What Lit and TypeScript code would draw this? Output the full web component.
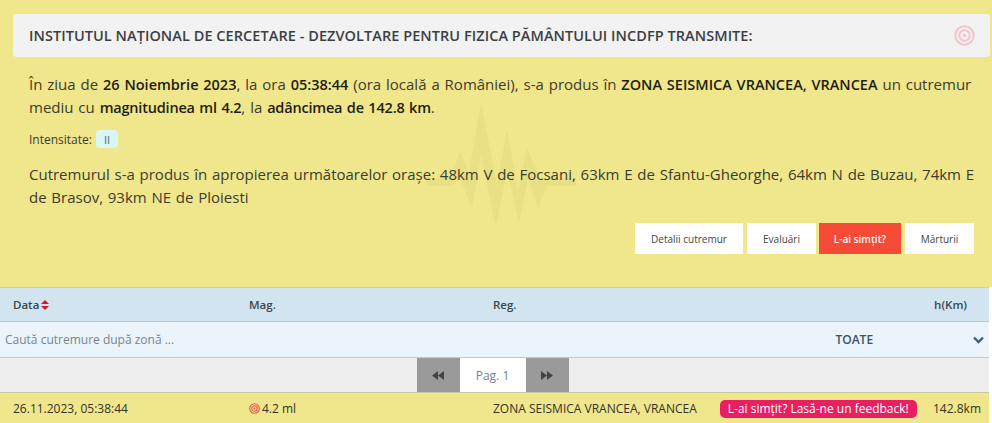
import { LitElement, html, css, svg } from "lit";
import { customElement } from "lit/decorators.js";

const target = (size: number, color: string) => html`<svg class="tg" width=${size} height=${size} viewBox="0 0 24 24" fill="none" stroke=${color} stroke-width="2.4">
  <circle cx="12" cy="12" r="10.5"></circle><circle cx="12" cy="12" r="6"></circle><circle cx="12" cy="12" r="2" fill=${color} stroke="none"></circle></svg>`;

@customElement("app-root")
export class AppRoot extends LitElement {
  static styles = css`
    :host { display: block; width: 992px; height: 423px; overflow: hidden; background: #fff;
      font-family: "Open Sans", sans-serif; color: #333; font-size: 14px; }
    * { box-sizing: border-box; }
    .panel { position: relative; height: 287px; background: #f0e68c; padding: 14px 2px 0 13px; }
    .wave { position: absolute; left: 427px; top: 100px; }
    .head { position: relative; height: 43px; background: #f2f2f2; border-radius: 4px; display: flex; align-items: center;
      justify-content: space-between; padding: 0 15px 0 16px; font-size: 14.5px; font-weight: 600; color: #3a3f44; letter-spacing: 0.06px; }
    .body { position: relative; padding: 16px 13px 0 16px; }
    p { margin: 0; font-size: 15px; line-height: 23px; color: #3c3c2c; word-spacing: 1px; }
    b { font-weight: 600; font-size: 14.5px; color: #1e1e12; }
    .tight { letter-spacing: -0.2px; }
    .int { display: flex; align-items: center; gap: 4px; height: 20px; margin-top: 10px; font-size: 12px; color: #3c3c2c; }
    .badge { background: #d9f7f7; border-radius: 4px; width: 22px; height: 18px; display: flex; align-items: center; justify-content: center; color: #55656f; font-size: 11px; }
    .p2 { margin-top: 14px; word-spacing: 0.85px; }
    .btns { display: flex; justify-content: flex-end; gap: 4px; margin: 14px 3px 0 0; }
    .btn { height: 31px; background: #fff; color: #444; font-size: 10px; display: flex; align-items: center; justify-content: center; }
    .b1 { width: 108px; } .b2 { width: 69px; } .b3 { width: 82px; background: #f44a36; color: #fff; font-weight: 600; margin-left: -1px; } .b4 { width: 69px; }
    .table { width: 989px; }
    .cols { display: grid; grid-template-columns: 249px 244px 1fr auto; align-items: center; }
    .th { height: 35px; background: #d3e4f1; border-top: 1px solid #c5ccd0; border-bottom: 1px solid #c0c8cc; padding: 0 22px 0 0; font-size: 11.5px; font-weight: 600; color: #37474f; }
    .th > :first-child { padding-left: 13px; display: flex; align-items: center; gap: 2px; }
    .filter { height: 36px; background: #ebf3fb; border-bottom: 1px solid #c0c8cc; display: flex; align-items: center; font-size: 12px; color: #78858d; padding: 0 5px; }
    .filter .q { width: 831px; }
    .filter .all { width: 140px; padding-left: 2px; font-weight: 600; color: #3b5268; }
    .pager { height: 35px; background: #eee; border-bottom: 1px solid #c9c7a0; display: flex; justify-content: center; padding-right: 4px; }
    .arrow { width: 43px; background: #9a9a9a; display: flex; align-items: center; justify-content: center; }
    .pg { width: 66px; background: #fff; color: #6c8494; font-size: 12px; font-weight: 500; display: flex; align-items: center; justify-content: center; }
    .row { height: 31px; background: #f0e68c; font-size: 12px; color: #33332a; padding-right: 8px; }
    .row > :first-child { padding-left: 13px; }
    .mag { display: flex; align-items: center; gap: 2px; }
    .tg { flex: none; display: block; }
    .pill { background: #e91e63; color: #fff; border-radius: 5px; height: 18px; width: 197px; display: flex; align-items: center; justify-content: center; font-size: 12px; }
    .feedwrap { display: flex; align-items: center; gap: 23px; }
  `;

  render() {
    return html`
      <div class="panel">
        <svg class="wave" width="150" height="130" viewBox="427 100 150 130" fill="#e9df84">
          ${svg`<path d="M427 178 H451 L460 152 L469 172 L481 102 L497 185 L507 130 L518 190 L527 148 L540 178 H576 V186 H547 L538 208 L528 178 L519 223 L507 170 L496 228 L481 155 L472 208 L460 178 L452 186 H427 Z"></path>`}
        </svg>
        <div class="head"><span>INSTITUTUL NAȚIONAL DE CERCETARE - DEZVOLTARE PENTRU FIZICA PĂMÂNTULUI INCDFP TRANSMITE:</span>${target(21, "#f3c6c8")}</div>
        <div class="body">
          <p>În ziua de <b>26 Noiembrie 2023</b>, la ora <b>05:38:44</b> (ora locală a României), s-a produs în <b>ZONA SEISMICA VRANCEA, VRANCEA</b> un cutremur mediu cu <b class="tight">magnitudinea ml 4.2</b>, la <b class="tight">adâncimea de 142.8 km</b>.</p>
          <div class="int">Intensitate: <span class="badge">II</span></div>
          <p class="p2">Cutremurul s-a produs în apropierea următoarelor orașe: 48km V de Focsani, 63km E de Sfantu-Gheorghe, 64km N de Buzau, 74km E de Brasov, 93km NE de Ploiesti</p>
          <div class="btns">
            <div class="btn b1">Detalii cutremur</div><div class="btn b2">Evaluări</div><div class="btn b3">L-ai simțit?</div><div class="btn b4">Mărturii</div>
          </div>
        </div>
      </div>
      <div class="table">
        <div class="cols th">
          <div>Data <svg width="8" height="10" viewBox="0 0 8 10" fill="#d3182b"><path d="M4 0 L8 4 H0 Z M0 6 H8 L4 10 Z"></path></svg></div>
          <div>Mag.</div><div>Reg.</div><div>h(Km)</div>
        </div>
        <div class="filter">
          <div class="q">Caută cutremure după zonă ...</div>
          <div class="all">TOATE</div>
          <svg width="11" height="8" viewBox="0 0 11 8" fill="none" stroke="#3b5f80" stroke-width="2.4"><path d="M1 1.5 L5.5 6 L10 1.5"></path></svg>
        </div>
        <div class="pager">
          <div class="arrow"><svg width="12" height="9" viewBox="0 0 12 9" fill="#444"><path d="M6 0 V9 L0 4.5 Z M12 0 V9 L6 4.5 Z"></path></svg></div>
          <div class="pg">Pag. 1</div>
          <div class="arrow"><svg width="12" height="9" viewBox="0 0 12 9" fill="#444"><path d="M0 0 V9 L6 4.5 Z M6 0 V9 L12 4.5 Z"></path></svg></div>
        </div>
        <div class="cols row">
          <div>26.11.2023, 05:38:44</div>
          <div class="mag">${target(11, "#e2574c")}<span>4.2 ml</span></div>
          <div class="feedwrap"><span>ZONA SEISMICA VRANCEA, VRANCEA</span><span class="pill">L-ai simțit? Lasă-ne un feedback!</span></div>
          <div class="hkm">142.8km</div>
        </div>
      </div>
    `;
  }
}
